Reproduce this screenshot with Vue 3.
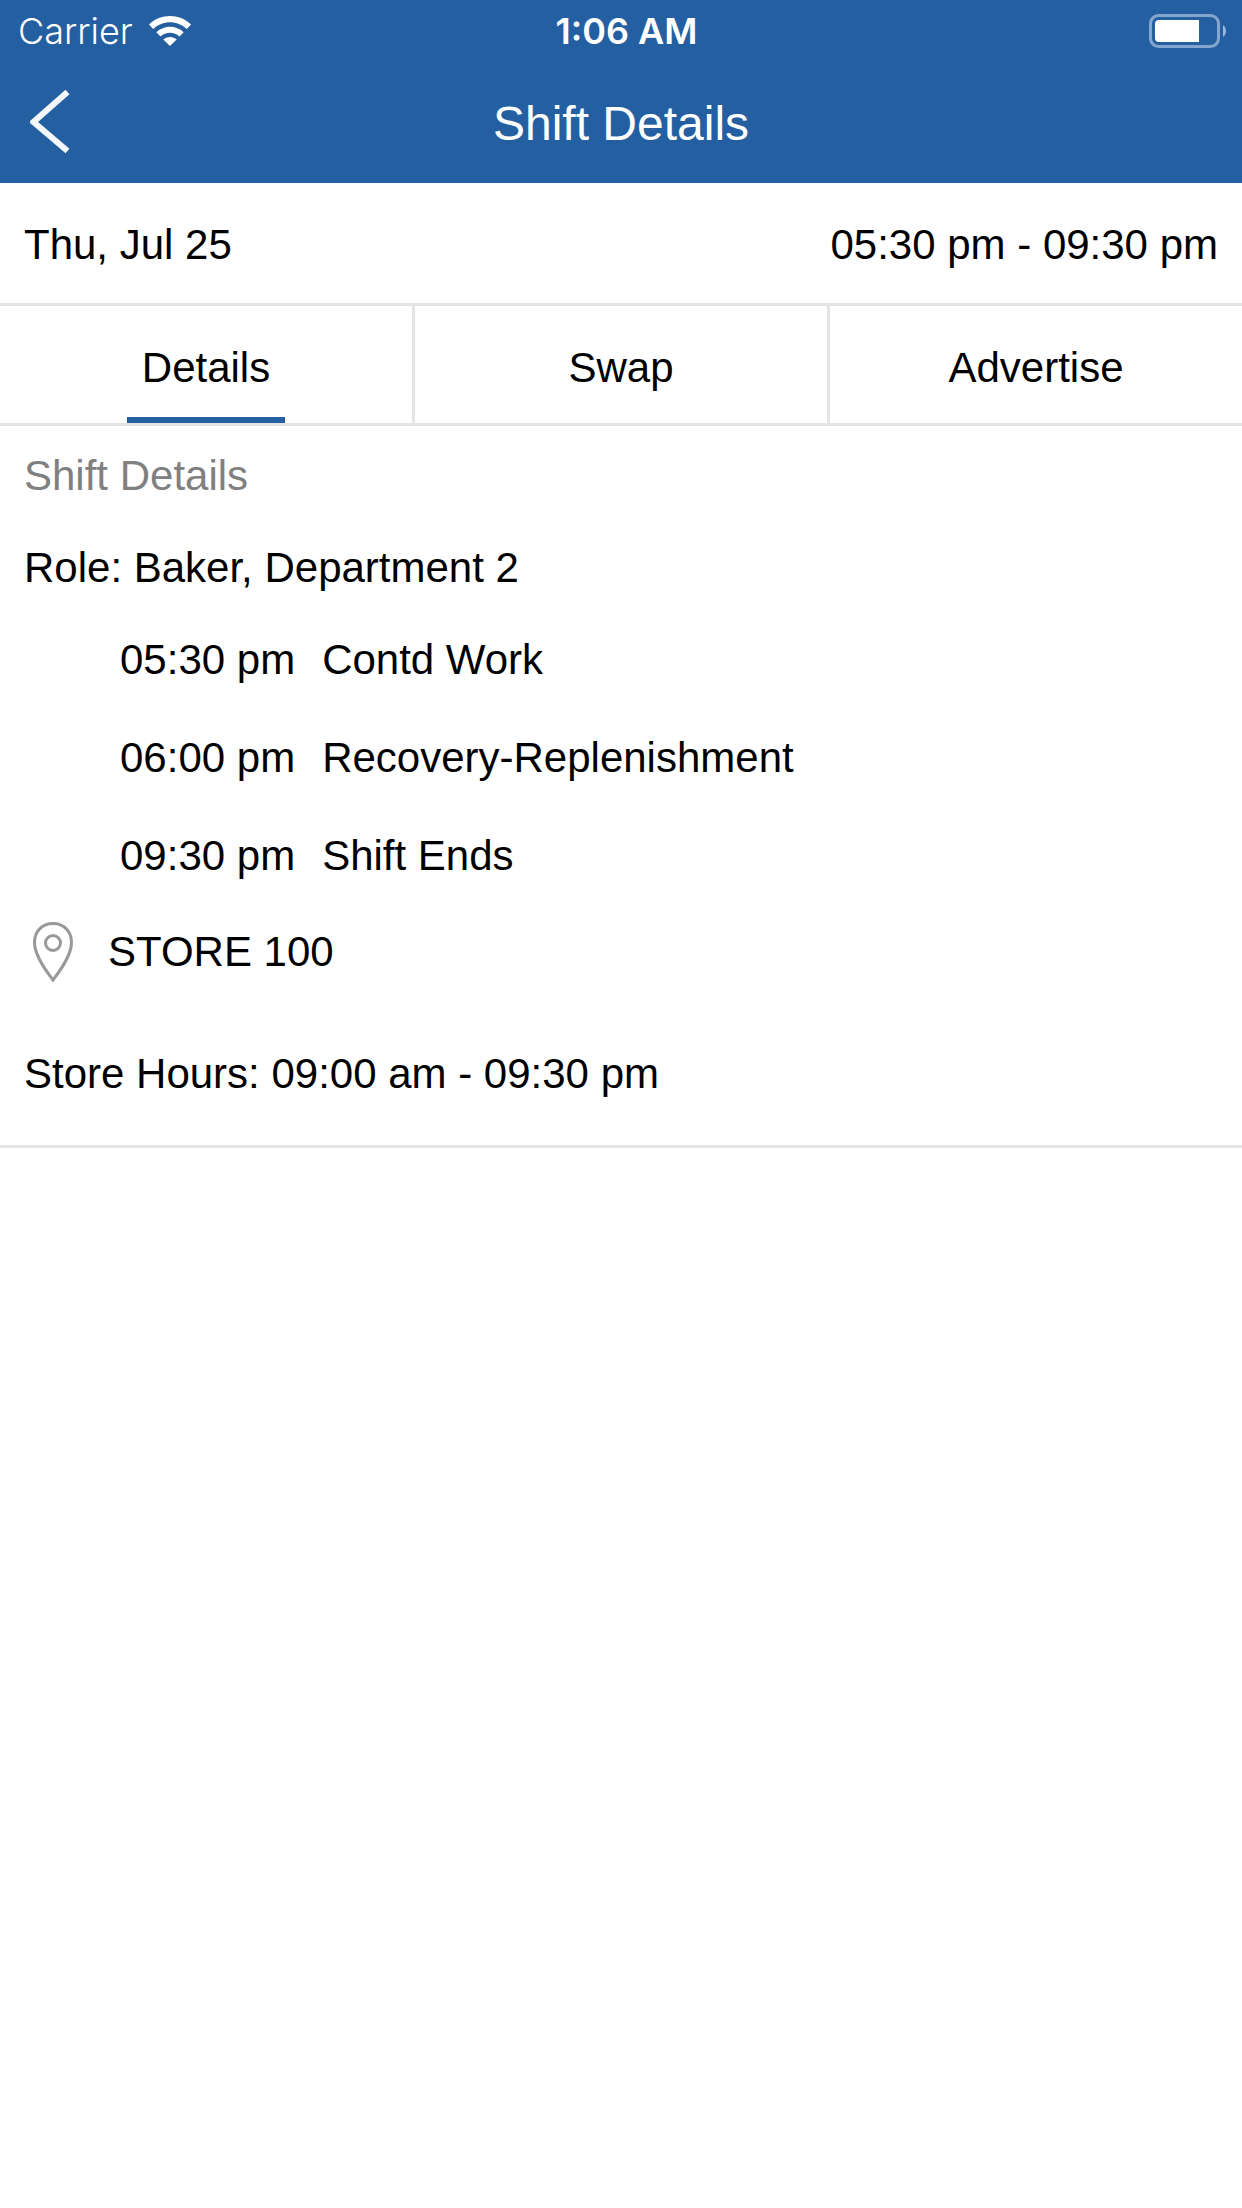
<template>
  <div class="screen">
    <header class="header">
      <div class="status-bar">
        <div class="status-bar__carrier">
          <span>Carrier</span>
          <svg class="wifi-icon" viewBox="0 0 42 30" aria-hidden="true">
            <path d="M0 8.500C11.500 -2.800 30.500 -2.800 42 8.500L37.800 13C28.500 4 13.500 4 4.200 13Z" />
            <path d="M7.300 16.200C15 8.800 27 8.800 34.700 16.200L30.500 20.600C25 15.600 17 15.600 11.500 20.600Z" />
            <path d="M14.300 23.600C18 20.200 24 20.200 27.700 23.600L21 30Z" />
          </svg>
        </div>
        <span class="status-bar__clock">1:06 AM</span>
        <svg class="battery-icon" viewBox="0 0 78 34" aria-hidden="true">
          <rect class="battery-icon__shell" x="1.500" y="1.500" width="68" height="31" rx="8" />
          <path class="battery-icon__level" d="M50 6H10a4 4 0 0 0-4 4v14a4 4 0 0 0 4 4h40Z" />
          <path class="battery-icon__cap" d="M74 11a7.500 7.500 0 0 1 0 12Z" />
        </svg>
      </div>
      <div class="nav-bar">
        <button class="nav-bar__back" type="button" aria-label="Back">
          <svg class="back-icon" viewBox="0 0 40 64" aria-hidden="true">
            <path d="M37.500 2 3.500 32 37.500 61" />
          </svg>
        </button>
        <h1 class="nav-bar__title">Shift Details</h1>
      </div>
    </header>

    <div class="summary">
      <span>{{ shift.date }}</span>
      <span>{{ shift.hours }}</span>
    </div>

    <nav class="tabs">
      <button
        v-for="tab in tabs"
        :key="tab"
        type="button"
        class="tab"
        :class="{ 'tab--active': tab === activeTab }"
        @click="activeTab = tab"
      >
        {{ tab }}
      </button>
    </nav>

    <main class="details">
      <h2 class="details__heading">Shift Details</h2>
      <p class="details__role">Role: {{ shift.role }}</p>
      <ul class="events">
        <li v-for="event in shift.events" :key="event.time" class="event">
          <span>{{ event.time }}</span>
          <span>{{ event.label }}</span>
        </li>
      </ul>
      <div class="store">
        <svg class="pin-icon" viewBox="0 0 40 60" aria-hidden="true">
          <path d="M20 58C14 50 1.500 34 1.500 20.500C1.500 9.500 9 1.500 20 1.500S38.500 9.500 38.500 20.500C38.500 34 26 50 20 58Z" />
          <circle cx="20" cy="21" r="7.500" />
        </svg>
        <span>{{ shift.store }}</span>
      </div>
      <p class="details__hours">Store Hours: {{ shift.storeHours }}</p>
    </main>
  </div>
</template>

<script setup>
import { ref } from 'vue';

const tabs = ['Details', 'Swap', 'Advertise'];
const activeTab = ref('Details');

const shift = {
  date: 'Thu, Jul 25',
  hours: '05:30 pm - 09:30 pm',
  role: 'Baker, Department 2',
  events: [
    { time: '05:30 pm', label: 'Contd Work' },
    { time: '06:00 pm', label: 'Recovery-Replenishment' },
    { time: '09:30 pm', label: 'Shift Ends' }
  ],
  store: 'STORE 100',
  storeHours: '09:00 am - 09:30 pm'
};
</script>

<style>
body {
  margin: 0;
  background-color: white;
}
</style>

<style scoped>
.screen {
  min-height: 100vh;
  background-color: white;
  color: black;
  font-family: "Helvetica Neue", "Liberation Sans", Arial, sans-serif;
  font-size: 42px;
  line-height: 48px;
}

h1,
h2,
p,
ul {
  margin: 0;
  padding: 0;
  font-size: inherit;
  font-weight: 400;
}

button {
  border: none;
  background: none;
  color: inherit;
  font: inherit;
  cursor: pointer;
}

svg {
  display: block;
}

.header {
  background-color: #245fa1;
  color: white;
}

.status-bar {
  display: grid;
  grid-template-columns: 1fr auto 1fr;
  align-items: center;
  height: 62px;
  padding: 0 15px 0 18px;
  box-sizing: border-box;
  font-family: Inter, sans-serif;
  font-size: 36px;
  font-weight: 300;
}

.status-bar__carrier {
  display: flex;
  align-items: center;
  gap: 16px;
}

.status-bar__clock {
  padding-left: 8px;
  font-weight: 600;
}

.wifi-icon {
  width: 42px;
  height: 30px;
  fill: white;
}

.battery-icon {
  justify-self: end;
  width: 78px;
  height: 34px;
}

.battery-icon__shell {
  fill: none;
  stroke: #84a6cc;
  stroke-width: 3;
}

.battery-icon__level {
  fill: white;
}

.battery-icon__cap {
  fill: #9bb6d5;
}

.nav-bar {
  display: grid;
  grid-template-columns: 1fr auto 1fr;
  align-items: center;
  height: 121px;
}

.nav-bar__back {
  justify-self: start;
  padding: 14px 30px 16px;
}

.back-icon {
  width: 40px;
  height: 64px;
  fill: none;
  stroke: #f4f7fb;
  stroke-width: 6;
}

.nav-bar__title {
  padding-top: 2px;
  font-size: 48px;
}

.summary {
  display: flex;
  justify-content: space-between;
  padding: 38px 24px 34px;
  border-bottom: 3px solid #e4e4e4;
}

.tabs {
  display: grid;
  grid-template-columns: repeat(3, 1fr);
  gap: 3px;
  border-bottom: 3px solid #e4e4e4;
  background-color: #e4e4e4;
}

.tab {
  display: flex;
  flex-direction: column;
  align-items: center;
  gap: 25px;
  padding: 38px 0 0;
  background-color: white;
}

.tab::after {
  content: "";
  width: 158px;
  max-width: 100%;
  height: 6px;
}

.tab--active::after {
  background-color: #245fa1;
}

.details {
  padding: 26px 24px 47px;
  border-bottom: 3px solid #e4e4e4;
}

.details__heading {
  color: #808080;
}

.details__role {
  margin-top: 44px;
}

.events {
  display: flex;
  flex-direction: column;
  gap: 50px;
  margin-top: 44px;
  padding-left: 96px;
  list-style: none;
}

.event {
  display: flex;
  gap: 27px;
}

.store {
  display: flex;
  align-items: center;
  gap: 35px;
  margin-top: 42px;
  padding-left: 9px;
}

.pin-icon {
  width: 40px;
  height: 60px;
  fill: none;
  stroke: #999999;
  stroke-width: 3;
}

.details__hours {
  margin-top: 68px;
}
</style>
